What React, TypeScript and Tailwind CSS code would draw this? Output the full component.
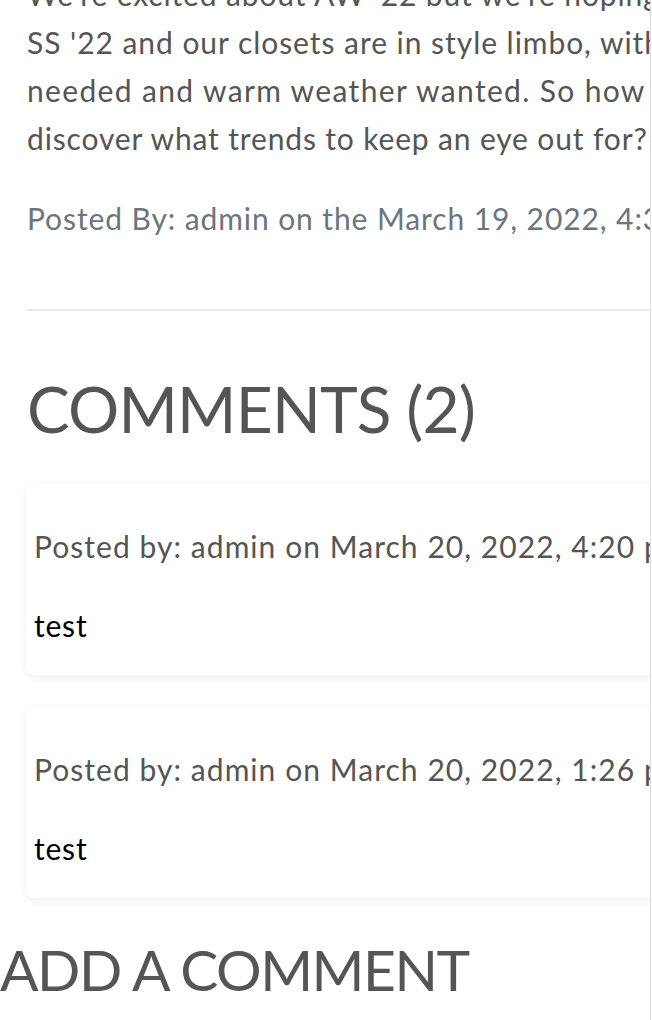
export default function App() {
  const font = { fontFamily: "Lato, 'Noto Sans', sans-serif" };
  const Card = ({ date }: { date: string }) => (
    <div className="mt-[32px] first:mt-0 rounded-[8px] bg-white shadow-[0_2px_10px_rgba(0,0,0,0.07)] pl-[8px] pt-[38px] pb-[26px] w-[700px]">
      <div className="whitespace-nowrap text-[30px] leading-[48px] tracking-[1.05px] text-[#555555]">
        Posted by: admin on {date}
      </div>
      <div className="mt-[31px] whitespace-nowrap text-[30px] leading-[48px] tracking-[0.8px] text-black">test</div>
    </div>
  );
  return (
    <div className="w-[652px] h-[1020px] overflow-hidden bg-white" style={font}>
      <div className="w-[651px] h-full overflow-hidden border-r border-[#dddddd]">
        <div className="pl-[27px] -mt-[30px]">
          <div className="text-[30px] leading-[48px] tracking-[0.85px] text-[#555555] whitespace-nowrap">
            <div>We're excited about AW '22 but we're hoping for</div>
            <div className="tracking-[0.95px]">SS '22 and our closets are in style limbo, with layers</div>
            <div className="tracking-[1.35px]">needed and warm weather wanted. So how do we</div>
            <div>discover what trends to keep an eye out for?</div>
          </div>
          <div className="mt-[32px] text-[30px] leading-[48px] tracking-[0.9px] text-[#6c757d] whitespace-nowrap">
            Posted By: admin on the March 19, 2022, 4:30 p.m.
          </div>
          <div className="mt-[67px] h-[2px] bg-[#e9e9e9] w-[700px]" />
          <h2 className="mt-[59px] text-[64px] leading-[77px] tracking-[-0.8px] text-[#555555] whitespace-nowrap">COMMENTS (2)</h2>
          <div className="mt-[37px] -ml-[1px]">
            <Card date="March 20, 2022, 4:20 p.m." />
            <Card date="March 20, 2022, 1:26 p.m." />
          </div>
        </div>
        <h2 className="mt-[37px] text-[57px] leading-[68px] tracking-[-1.5px] text-[#555555] whitespace-nowrap">ADD A COMMENT</h2>
      </div>
    </div>
  );
}
